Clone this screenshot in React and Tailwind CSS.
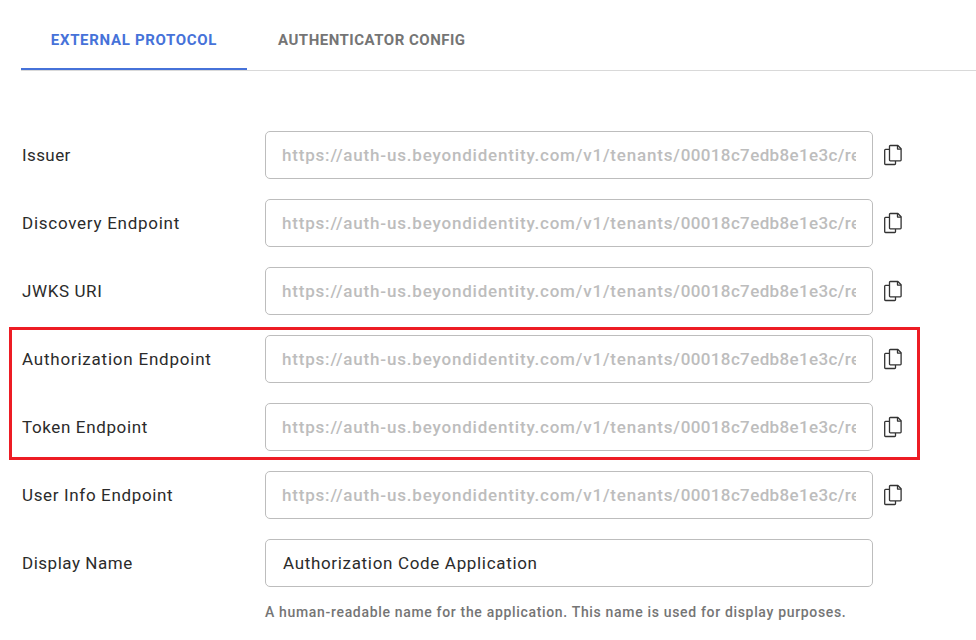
const ENDPOINT_HOST = 'https://auth-us.beyondidentity.com/v1/tenants/';
const ENDPOINT_TENANT = '00018c7edb8e1e3c/re';

function CopyIcon() {
  return (
    <svg width="20" height="22" viewBox="0 0 20 22" fill="none" stroke="#333333" strokeWidth="1.3" strokeLinejoin="round">
      <path d="M6.5 5.4H2.5a.8.8 0 0 0-.8.8v13.5c0 .5.3.8.8.8h9.2c.5 0 .8-.3.8-.8V17" />
      <path d="M7.3 1.5h7.6l3.2 3.2v11.3c0 .5-.3.8-.8.8H7.3a.8.8 0 0 1-.8-.8V2.3c0-.5.3-.8.8-.8z" fill="#ffffff" />
      <path d="M14.5 1.5v3.6h3.6" />
    </svg>
  );
}

function Row({ label, tracking, children }) {
  return (
    <div className="flex h-12 items-center">
      <div className="w-[244px] shrink-0 pl-px text-[17px] leading-6 text-[#2b2b2b]">
        <span className={tracking}>{label}</span>
      </div>
      {children}
    </div>
  );
}

function EndpointRow({ label, tracking }) {
  return (
    <Row label={label} tracking={tracking}>
      <div className="h-12 w-[608px] shrink-0 rounded-[5px] border border-[#bdbdbd] px-4">
        <div className="overflow-hidden text-[17px] leading-[46px] font-medium whitespace-nowrap text-[#bdbdbd]">
          <span className="tracking-[0.81px]">{ENDPOINT_HOST}</span>
          <span className="tracking-[0.37px]">{ENDPOINT_TENANT}</span>
        </div>
      </div>
      <button type="button" aria-label={`Copy ${label}`} className="ml-2.5">
        <CopyIcon />
      </button>
    </Row>
  );
}

export default function App() {
  return (
    <div className="h-[640px] w-[976px] overflow-hidden bg-white pl-[21px] font-['Roboto','Liberation_Sans',sans-serif]">
      <div className="flex h-[71px] border-b border-[#d9d9d9] text-[15px] leading-5 font-bold">
        <div className="flex w-[226px] justify-center border-b-2 border-[#4672d9] pt-[30px] text-[#4672d9]">
          <span className="tracking-[0.68px] whitespace-nowrap">EXTERNAL PROTOCOL</span>
        </div>
        <div className="pt-[30px] pl-[31px] text-[#757575]">
          <span className="tracking-[0.5px] whitespace-nowrap">AUTHENTICATOR CONFIG</span>
        </div>
      </div>

      <div className="mt-[60px] flex flex-col gap-5">
        <EndpointRow label="Issuer" tracking="tracking-[0.4px]" />
        <EndpointRow label="Discovery Endpoint" tracking="tracking-[0.73px]" />
        <EndpointRow label="JWKS URI" tracking="tracking-[0.6px]" />
        <div className="relative flex flex-col gap-5">
          <EndpointRow label="Authorization Endpoint" tracking="tracking-[0.78px]" />
          <EndpointRow label="Token Endpoint" tracking="tracking-[0.63px]" />
          <div className="pointer-events-none absolute -top-2 -left-3 h-[133px] w-[911px] border-3 border-[#ed1c24]" />
        </div>
        <EndpointRow label="User Info Endpoint" tracking="tracking-[0.65px]" />
        <Row label="Display Name" tracking="tracking-[0.52px]">
          <div className="h-12 w-[608px] shrink-0 rounded-[5px] border border-[#bdbdbd] pr-4 pl-[17px] text-[17px] leading-[46px] text-[#2b2b2b]">
            <span className="tracking-[0.67px]">Authorization Code Application</span>
          </div>
        </Row>
      </div>
      <p className="mt-[15px] ml-[244px] text-[14px] leading-5 font-medium whitespace-nowrap text-[#757575]">
        <span className="tracking-[0.67px]">
          A human-readable name for the application. This name is used for display purposes.
        </span>
      </p>
    </div>
  );
}
